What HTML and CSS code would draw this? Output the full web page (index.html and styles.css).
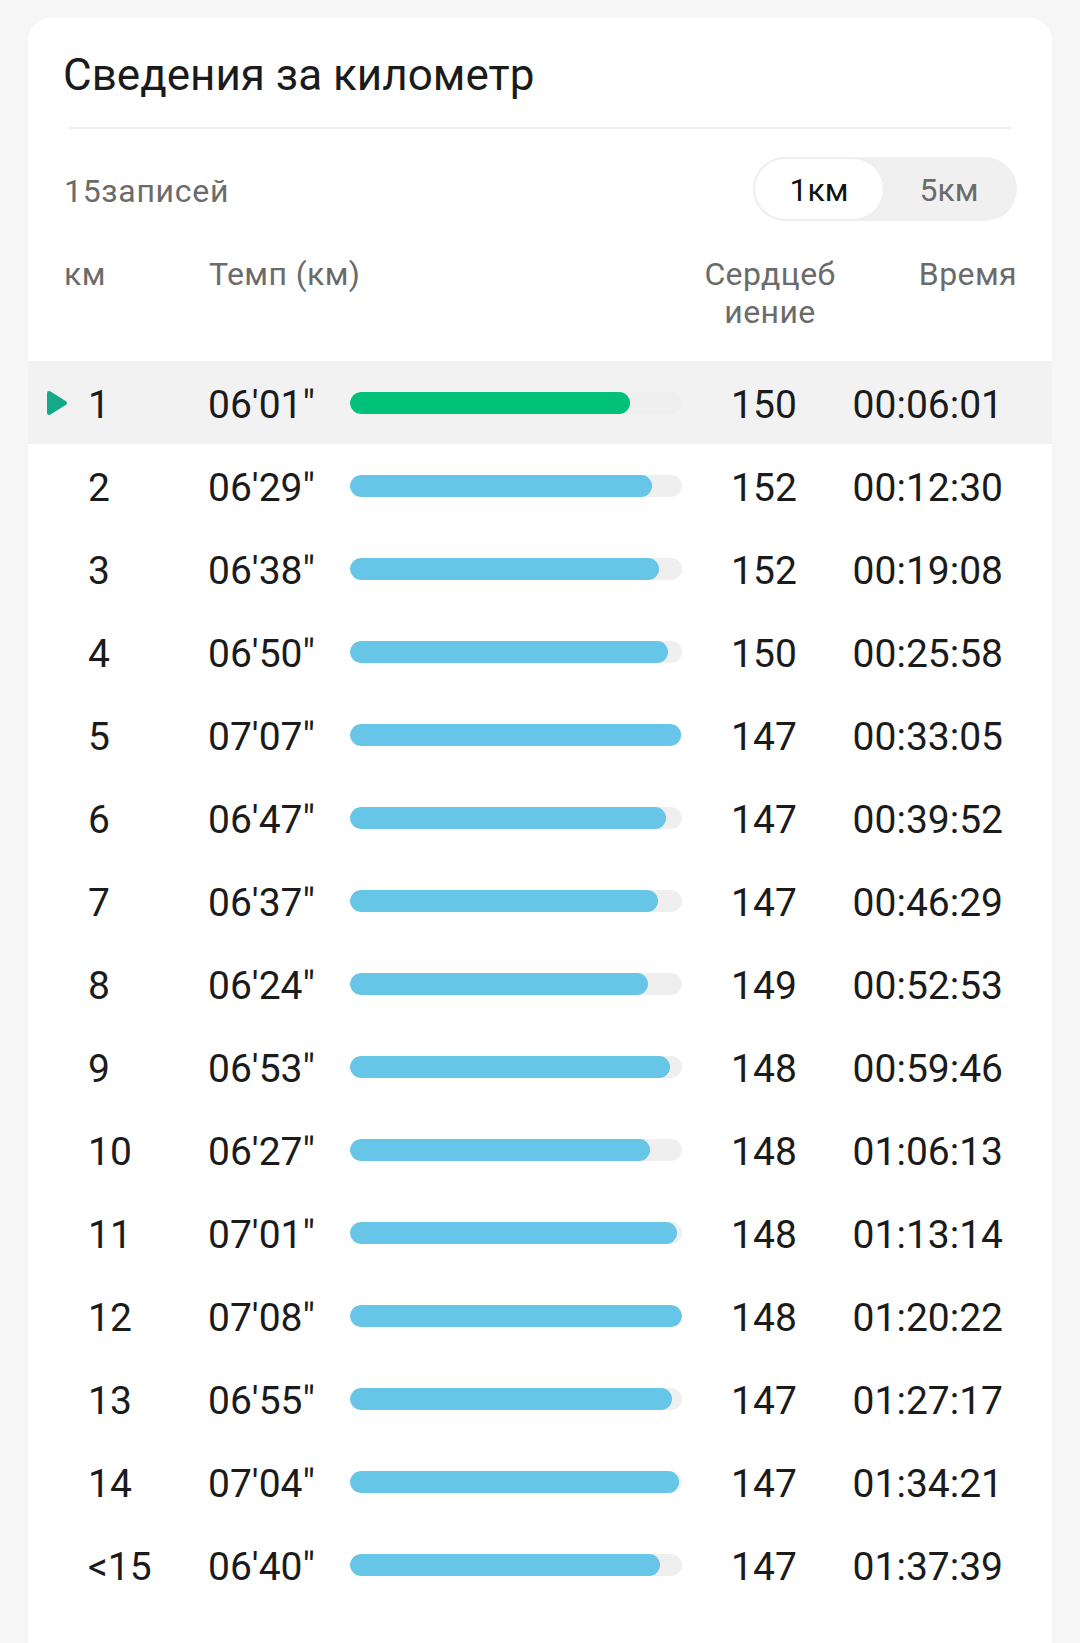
FILE: index.html
```html
<!DOCTYPE html>
<html lang="ru">
<head>
<meta charset="utf-8">
<title>Сведения за километр</title>
<link rel="stylesheet" href="styles.css">
</head>
<body>
<div class="card">
  <h1 class="title">Сведения за километр</h1>
  <div class="divider"></div>
  <div class="sub">
    <span class="count">15записей</span>
    <div class="toggle">
      <span class="opt active">1км</span>
      <span class="opt">5км</span>
    </div>
  </div>
  <div class="head">
    <span class="h-km">км</span>
    <span class="h-pace">Темп (км)</span>
    <span class="h-hr">Сердцеб<br>иение</span>
    <span class="h-time">Время</span>
  </div>
  <div class="rows">
    <div class="row current">
      <span class="mark"><svg width="22" height="26" viewBox="0 0 22 26"><path d="M3 3 L19 13 L3 23 Z" fill="#14a98a" stroke="#14a98a" stroke-width="4" stroke-linejoin="round"/></svg></span>
      <span class="num">1</span><span class="pace">06'01"</span>
      <span class="bar"><span class="fill green" style="width:84.3%"></span></span>
      <span class="hr">150</span><span class="time">00:06:01</span>
    </div>
    <div class="row"><span class="mark"></span><span class="num">2</span><span class="pace">06'29"</span><span class="bar"><span class="fill" style="width:90.9%"></span></span><span class="hr">152</span><span class="time">00:12:30</span></div>
    <div class="row"><span class="mark"></span><span class="num">3</span><span class="pace">06'38"</span><span class="bar"><span class="fill" style="width:93.0%"></span></span><span class="hr">152</span><span class="time">00:19:08</span></div>
    <div class="row"><span class="mark"></span><span class="num">4</span><span class="pace">06'50"</span><span class="bar"><span class="fill" style="width:95.8%"></span></span><span class="hr">150</span><span class="time">00:25:58</span></div>
    <div class="row"><span class="mark"></span><span class="num">5</span><span class="pace">07'07"</span><span class="bar"><span class="fill" style="width:99.8%"></span></span><span class="hr">147</span><span class="time">00:33:05</span></div>
    <div class="row"><span class="mark"></span><span class="num">6</span><span class="pace">06'47"</span><span class="bar"><span class="fill" style="width:95.1%"></span></span><span class="hr">147</span><span class="time">00:39:52</span></div>
    <div class="row"><span class="mark"></span><span class="num">7</span><span class="pace">06'37"</span><span class="bar"><span class="fill" style="width:92.8%"></span></span><span class="hr">147</span><span class="time">00:46:29</span></div>
    <div class="row"><span class="mark"></span><span class="num">8</span><span class="pace">06'24"</span><span class="bar"><span class="fill" style="width:89.7%"></span></span><span class="hr">149</span><span class="time">00:52:53</span></div>
    <div class="row"><span class="mark"></span><span class="num">9</span><span class="pace">06'53"</span><span class="bar"><span class="fill" style="width:96.5%"></span></span><span class="hr">148</span><span class="time">00:59:46</span></div>
    <div class="row"><span class="mark"></span><span class="num">10</span><span class="pace">06'27"</span><span class="bar"><span class="fill" style="width:90.4%"></span></span><span class="hr">148</span><span class="time">01:06:13</span></div>
    <div class="row"><span class="mark"></span><span class="num">11</span><span class="pace">07'01"</span><span class="bar"><span class="fill" style="width:98.4%"></span></span><span class="hr">148</span><span class="time">01:13:14</span></div>
    <div class="row"><span class="mark"></span><span class="num">12</span><span class="pace">07'08"</span><span class="bar"><span class="fill" style="width:100%"></span></span><span class="hr">148</span><span class="time">01:20:22</span></div>
    <div class="row"><span class="mark"></span><span class="num">13</span><span class="pace">06'55"</span><span class="bar"><span class="fill" style="width:97.0%"></span></span><span class="hr">147</span><span class="time">01:27:17</span></div>
    <div class="row"><span class="mark"></span><span class="num">14</span><span class="pace">07'04"</span><span class="bar"><span class="fill" style="width:99.1%"></span></span><span class="hr">147</span><span class="time">01:34:21</span></div>
    <div class="row"><span class="mark"></span><span class="num">&lt;15</span><span class="pace">06'40"</span><span class="bar"><span class="fill" style="width:93.5%"></span></span><span class="hr">147</span><span class="time">01:37:39</span></div>
  </div>
</div>
</body>
</html>
```

FILE: styles.css
```css
* { box-sizing: border-box; }
html, body {
  margin: 0;
  padding: 0;
  background: #f6f6f6;
}
body {
  font-family: Roboto, "Noto Sans", "Liberation Sans", sans-serif;
  color: #1b1b1b;
  width: 1080px;
  height: 1643px;
  overflow: hidden;
}
.card {
  margin: 18px 28px 0;
  background: #ffffff;
  border-radius: 22px 22px 0 0;
  padding-top: 30px;
  min-height: 1625px;
}
.title {
  margin: 0;
  padding-left: 35px;
  font-size: 44px;
  line-height: 54px;
  font-weight: 400;
  color: #1b1b1b;
}
.divider {
  margin: 25px 41px 0 41px;
  height: 2px;
  background: #eeeeee;
}
.sub {
  display: flex;
  justify-content: space-between;
  align-items: center;
  padding: 0 35px 0 36px;
  margin-top: 28px;
}
.count {
  font-size: 32px;
  letter-spacing: 0.7px;
  color: #6b6b6b;
  padding-top: 4px;
}
.toggle {
  display: flex;
  width: 264px;
  height: 64px;
  padding: 2px;
  border-radius: 32px;
  background: #f0f0f0;
}
.opt {
  flex: 1;
  display: flex;
  align-items: center;
  justify-content: center;
  font-size: 32px;
  color: #6b6b6b;
  border-radius: 30px;
  padding-top: 2px;
}
.opt.active {
  flex: 0 0 128px;
  background: #ffffff;
  color: #111111;
  box-shadow: 0 0 0 1px #ececec;
}
.head {
  display: grid;
  grid-template-columns: 145px 1fr 150px 172px;
  align-items: start;
  padding: 0 35px 0 36px;
  margin-top: 34px;
  font-size: 32px;
  letter-spacing: 0.4px;
  line-height: 38px;
  color: #6b6b6b;
}
.h-hr { text-align: center; }
.h-time { text-align: right; }
.rows {
  margin-top: 30px;
}
.row {
  display: grid;
  grid-template-columns: 60px 120px 142px 332px 164px 1fr;
  align-items: center;
  height: 83px;
  padding-right: 49px;
  font-size: 39px;
  line-height: 40px;
  color: #1b1b1b;
}
.row.current {
  background: #f2f2f2;
}
.mark {
  display: flex;
  align-items: center;
  padding-left: 18px;
}
.mark svg { display: block; }
.num, .pace, .hr, .time {
  padding-top: 5px;
}
.hr { text-align: center; }
.time { text-align: right; }
.bar {
  display: block;
  height: 22px;
  border-radius: 11px;
  background: #efefef;
  overflow: hidden;
}
.fill {
  display: block;
  height: 100%;
  border-radius: 11px;
  background: #67c5e8;
}
.fill.green {
  background: #00c177;
}
```
